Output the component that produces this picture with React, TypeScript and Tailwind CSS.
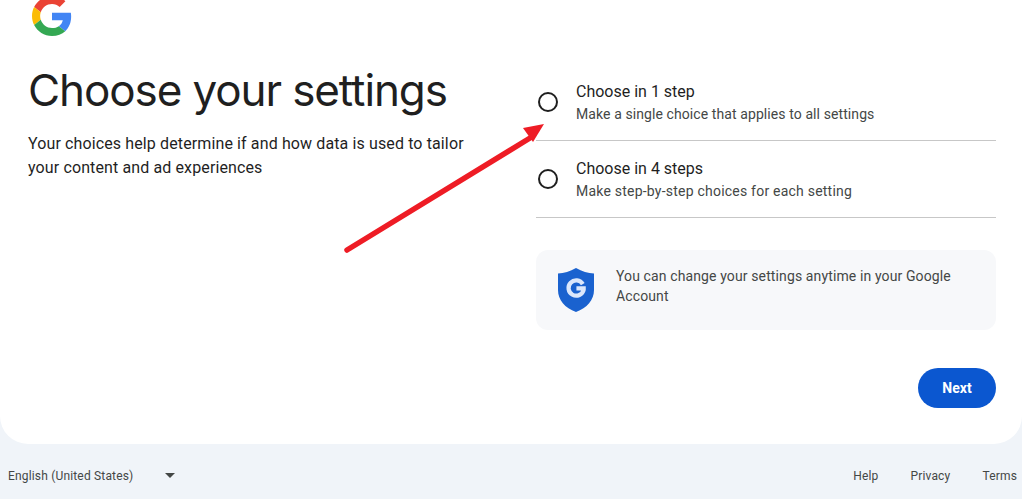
export default function App() {
  return (
    <div className="h-[499px] w-[1022px] overflow-hidden bg-[#f0f4f9] relative font-['Roboto',sans-serif]">
      <main className="h-[444px] bg-white rounded-b-[28px] flex">
        <section className="w-[536px] pl-[28px] flex flex-col">
          <svg className="ml-[4px] -mt-[4px] w-[40px] h-[40px] shrink-0" viewBox="0 0 48 48">
            <path fill="#EA4335" d="M24 9.5c3.54 0 6.71 1.22 9.21 3.6l6.85-6.85C35.9 2.38 30.47 0 24 0 14.62 0 6.51 5.38 2.56 13.22l7.98 6.19C12.43 13.72 17.74 9.5 24 9.5z" />
            <path fill="#4285F4" d="M46.98 24.55c0-1.57-.15-3.09-.38-4.55H24v9.02h12.94c-.58 2.96-2.26 5.48-4.78 7.18l7.73 6c4.51-4.18 7.09-10.36 7.09-17.65z" />
            <path fill="#FBBC05" d="M10.53 28.59c-.48-1.45-.76-2.99-.76-4.59s.27-3.14.76-4.59l-7.98-6.19C.92 16.46 0 20.12 0 24c0 3.88.92 7.54 2.56 10.78l7.97-6.19z" />
            <path fill="#34A853" d="M24 48c6.48 0 11.93-2.13 15.89-5.81l-7.73-6c-2.15 1.45-4.92 2.3-8.16 2.3-6.26 0-11.57-4.22-13.47-9.91l-7.98 6.19C6.51 42.62 14.62 48 24 48z" />
          </svg>
          <h1 className="mt-[24px] text-[44px] leading-[60px] text-[#1f1f1f] font-['Inter',sans-serif] tracking-[-1.1px] whitespace-nowrap">Choose your settings</h1>
          <p className="mt-[12px] text-[16px] leading-[24px] tracking-[0.12px] text-[#1f1f1f] w-[450px]">Your choices help determine if and how data is used to tailor your content and ad experiences</p>
        </section>
        <section className="w-[460px] pt-[63px] flex flex-col">
          <div className="h-[78px] flex items-center border-b border-[#c7c7c7]">
            <span className="ml-[2px] w-[20px] h-[20px] rounded-full border-2 border-[#1f1f1f]" />
            <div className="ml-[18px]">
              <div className="text-[16px] leading-[24px] text-[#1f1f1f]">Choose in 1 step</div>
              <div className="text-[14px] leading-[20px] tracking-[0.09px] text-[#444746]">Make a single choice that applies to all settings</div>
            </div>
          </div>
          <div className="h-[77px] flex items-center border-b border-[#c7c7c7]">
            <span className="ml-[2px] w-[20px] h-[20px] rounded-full border-2 border-[#1f1f1f]" />
            <div className="ml-[18px]">
              <div className="text-[16px] leading-[24px] text-[#1f1f1f]">Choose in 4 steps</div>
              <div className="text-[14px] leading-[20px] tracking-[0.22px] text-[#444746]">Make step-by-step choices for each setting</div>
            </div>
          </div>
          <div className="mt-[32px] h-[80px] bg-[#f7f8fa] rounded-[12px] flex pl-[22px]">
            <svg className="mt-[18px] w-[36px] h-[44px] shrink-0" viewBox="0 0 36 44">
              <path fill="#1a62cf" d="M18 0 C24 3.5 30 5 36 5.5 V22 C36 32 29 40 18 44 C7 40 0 32 0 22 V5.5 C6 5 12 3.5 18 0 Z" />
              <path fill="none" stroke="#dbe7fb" strokeWidth="5" transform="translate(18 20) scale(0.85) translate(-18 -22)" d="M26 17.5 A9 9 0 1 0 27 24 V22.5 H18.5" />
            </svg>
            <p className="ml-[22px] mt-[16px] text-[14px] leading-[20px] tracking-[0.12px] text-[#444746] w-[360px]">You can change your settings anytime in your Google Account</p>
          </div>
          <div className="mt-[38px] flex justify-end">
            <button className="w-[78px] h-[40px] rounded-full bg-[#0b57d0] text-white text-[14px] font-bold">Next</button>
          </div>
        </section>
      </main>
      <footer className="h-[55px] flex items-center justify-between pt-[8px] text-[12px] tracking-[0.17px] text-[#444746]">
        <div className="flex items-center pl-[8px]">
          <span className="w-[132px]">English (United States)</span>
          <span className="ml-[25px] w-0 h-0 border-x-[5px] border-x-transparent border-t-[5px] border-t-[#444746]" />
        </div>
        <div className="flex items-center gap-[32px] pr-[5px]">
          <span>Help</span>
          <span>Privacy</span>
          <span>Terms</span>
        </div>
      </footer>
      <svg className="absolute left-[340px] top-[118px] w-[210px] h-[140px]" viewBox="0 0 210 140">
        <path d="M7 132 L190 20" stroke="#ee1c25" strokeWidth="5.5" strokeLinecap="round" fill="none" />
        <path d="M204 6 L183 10 L193 24 Z" fill="#ee1c25" />
      </svg>
    </div>
  );
}
